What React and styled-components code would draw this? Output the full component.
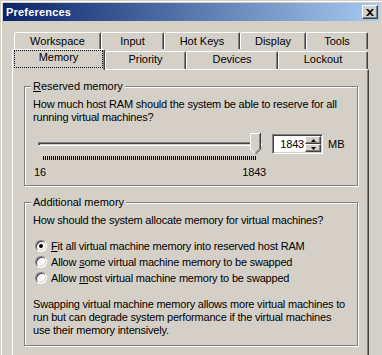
import React from "react";
import styled, { createGlobalStyle } from "styled-components";

const GlobalStyle = createGlobalStyle`
  html, body {
    margin: 0;
    padding: 0;
    overflow: hidden;
    background: #d4d0c8;
  }
  body {
    font-family: "Liberation Sans", Arial, sans-serif;
    font-size: 11px;
    line-height: 13px;
    color: #000;
  }
`;

const Window = styled.div`
  box-sizing: border-box;
  width: 382px;
  height: 355px;
  overflow: hidden;
  padding: 3px 3px 0;
  background: #d4d0c8;
  box-shadow: inset 1px 1px 0 #d4d0c8, inset 2px 2px 0 #fff;
  display: flex;
  flex-direction: column;
`;

const TitleBar = styled.div`
  height: 18px;
  flex: none;
  display: flex;
  align-items: center;
  justify-content: space-between;
  padding: 0 1px 0 3px;
  background: linear-gradient(to right, #0a246a, #a6caf0);
`;

const Title = styled.span`
  color: #fff;
  font-weight: bold;
  letter-spacing: 0.2px;
`;

const CloseButton = styled.div`
  box-sizing: border-box;
  width: 16px;
  height: 14px;
  background: #d4d0c8;
  border: 1px solid;
  border-color: #fff #404040 #404040 #fff;
  box-shadow: inset -1px -1px 0 #808080;
  display: flex;
  align-items: center;
  justify-content: center;
`;

const Body = styled.div`
  flex: none;
  display: flex;
  flex-direction: column;
  padding: 11px 10px 0 9px;
`;

const TabRow = styled.div`
  display: flex;
  align-items: flex-end;
  height: ${(p) => p.$height}px;
  padding-left: ${(p) => p.$indent}px;
`;

const Tab = styled.div`
  box-sizing: border-box;
  flex: none;
  width: ${(p) => p.$width}px;
  height: ${(p) => p.$height}px;
  padding-top: ${(p) => p.$pad}px;
  margin-bottom: ${(p) => (p.$active ? -1 : 0)}px;
  display: flex;
  justify-content: center;
  align-items: flex-start;
  background: #d4d0c8;
  border: 1px solid;
  border-bottom: 0;
  border-color: #fff #404040 transparent #fff;
  border-radius: 2px 2px 0 0;
  box-shadow: inset -1px 0 0 #808080;
  position: relative;
  z-index: ${(p) => (p.$active ? 1 : 0)};
`;

const FocusLabel = styled.span`
  box-sizing: border-box;
  flex: 1;
  height: 18px;
  margin: 0 1px;
  border: 1px dotted #000;
  text-align: center;
`;

const Panel = styled.div`
  display: flex;
  flex-direction: column;
  gap: 10px;
  border: 1px solid;
  border-color: #fff #404040 #404040 #fff;
  box-shadow: inset -1px -1px 0 #808080;
  padding: 10px 10px 30px 11px;
`;

const Group = styled.fieldset`
  margin: 0;
  min-width: 0;
  border: 1px solid #808080;
  box-shadow: inset 1px 1px 0 #fff, 1px 1px 0 #fff;
  padding: 5px 8px ${(p) => p.$bottom}px 8px;
  display: flex;
  flex-direction: column;
`;

const Legend = styled.legend`
  padding: 0 2px;
  margin-left: -2px;
  background: #d4d0c8;
  line-height: 13px;
`;

const Text = styled.p`
  margin: 0;
  letter-spacing: -0.2px;
`;

const SliderRow = styled.div`
  display: flex;
  align-items: flex-start;
  margin-top: 9px;
`;

const Slider = styled.div`
  width: 224px;
  margin-left: 5px;
  display: flex;
  flex-direction: column;
`;

const TrackArea = styled.div`
  position: relative;
  height: 23px;
`;

const Track = styled.div`
  box-sizing: border-box;
  margin-top: 9px;
  height: 4px;
  border: 1px solid;
  border-color: #808080 #fff #fff #808080;
  box-shadow: inset 1px 1px 0 #404040;
`;

const Thumb = styled.svg`
  position: absolute;
  top: 0;
  left: ${(p) => p.$left}px;
`;

const Ticks = styled.div`
  height: 4px;
  margin: 0 6px 0 5px;
  background: repeating-linear-gradient(
    to right,
    #000 0 1px,
    transparent 1px 2px
  );
`;

const Scale = styled.div`
  width: 232px;
  margin: 6px 0 0 1px;
  display: flex;
  justify-content: space-between;
  letter-spacing: -0.2px;
`;

const SpinGroup = styled.div`
  display: flex;
  align-items: center;
  margin: 1px 0 0 10px;
`;

const SpinBox = styled.div`
  box-sizing: border-box;
  width: 51px;
  height: 20px;
  padding: 1px;
  display: flex;
  background: #fff;
  border: 1px solid;
  border-color: #808080 #fff #fff #808080;
  box-shadow: inset 1px 1px 0 #404040, inset -1px -1px 0 #d4d0c8;
`;

const SpinValue = styled.span`
  flex: 1;
  text-align: right;
  padding-right: 1px;
  line-height: 16px;
  letter-spacing: -0.2px;
`;

const SpinButtons = styled.div`
  width: 16px;
  display: flex;
  flex-direction: column;
`;

const SpinButton = styled.div`
  box-sizing: border-box;
  flex: 1;
  display: flex;
  align-items: center;
  justify-content: center;
  background: #d4d0c8;
  border: 1px solid;
  border-color: #fff #404040 #404040 #fff;
  box-shadow: inset -1px -1px 0 #808080;
`;

const Unit = styled.span`
  margin-left: 5px;
`;

const RadioList = styled.div`
  display: flex;
  flex-direction: column;
  margin-top: 11px;
`;

const RadioRow = styled.label`
  height: 16px;
  display: flex;
  align-items: center;
  gap: 4px;
  padding-left: 2px;
  letter-spacing: -0.2px;
`;

const RadioDot = styled.span`
  box-sizing: border-box;
  flex: none;
  width: 12px;
  height: 12px;
  border-radius: 50%;
  border: 1px solid;
  border-color: #808080 #fff #fff #808080;
  box-shadow: inset 1px 1px 0 #404040, inset -1px -1px 0 #d4d0c8;
  background: #fff;
  display: flex;
  align-items: center;
  justify-content: center;

  &::after {
    content: "";
    width: 4px;
    height: 4px;
    border-radius: 50%;
    background: ${(p) => (p.$checked ? "#000" : "transparent")};
  }
`;

const Note = styled(Text)`
  margin-top: 12px;
`;

const rowOneTabs = [
  { label: "Workspace", width: 87 },
  { label: "Input", width: 63 },
  { label: "Hot Keys", width: 76 },
  { label: "Display", width: 66 },
  { label: "Tools", width: 62 },
];

const rowTwoTabs = [
  { label: "Memory", width: 93, active: true },
  { label: "Priority", width: 81 },
  { label: "Devices", width: 92 },
  { label: "Lockout", width: 90 },
];

const radios = [
  { pre: "", key: "F", post: "it all virtual machine memory into reserved host RAM", checked: true },
  { pre: "Allow ", key: "s", post: "ome virtual machine memory to be swapped" },
  { pre: "Allow ", key: "m", post: "ost virtual machine memory to be swapped" },
];

const CloseGlyph = () => (
  <svg width="8" height="7" viewBox="0 0 8 7">
    <path d="M0 0h2l2 2 2-2h2L5 3.5 8 7H6L4 5 2 7H0l3-3.5z" fill="#000" />
  </svg>
);

const ThumbShape = ({ left }) => (
  <Thumb $left={left} width="11" height="22" viewBox="0 0 11 22">
    <path d="M0 0H11V16L5.5 21.5L0 16Z" fill="#d4d0c8" />
    <path d="M0.5 16.5V0.5H10" stroke="#fff" fill="none" />
    <path d="M0.5 16L5 20.5" stroke="#fff" fill="none" />
    <path d="M10.5 0V16.2L5.5 21.2" stroke="#404040" fill="none" />
    <path d="M9.5 1V15.8L5.5 19.8" stroke="#808080" fill="none" />
  </Thumb>
);

const Arrow = ({ up }) => (
  <svg width="5" height="3" viewBox="0 0 5 3">
    <path d={up ? "M2.5 0L5 3H0Z" : "M0 0H5L2.5 3Z"} fill="#000" />
  </svg>
);

export default function App() {
  return (
    <>
      <GlobalStyle />
      <Window>
        <TitleBar>
          <Title>Preferences</Title>
          <CloseButton>
            <CloseGlyph />
          </CloseButton>
        </TitleBar>
        <Body>
          <TabRow $height={17} $indent={2}>
            {rowOneTabs.map((t) => (
              <Tab key={t.label} $width={t.width} $height={17} $pad={2}>
                {t.label}
              </Tab>
            ))}
          </TabRow>
          <TabRow $height={20} $indent={0}>
            {rowTwoTabs.map((t) =>
              t.active ? (
                <Tab key={t.label} $width={t.width} $height={21} $pad={0} $active>
                  <FocusLabel>{t.label}</FocusLabel>
                </Tab>
              ) : (
                <Tab key={t.label} $width={t.width} $height={18} $pad={1}>
                  {t.label}
                </Tab>
              )
            )}
          </TabRow>
          <Panel>
            <Group $bottom={6}>
              <Legend>
                <u>R</u>eserved memory
              </Legend>
              <Text>
                How much host RAM should the system be able to reserve for all
                <br />
                running virtual machines?
              </Text>
              <SliderRow>
                <Slider>
                  <TrackArea>
                    <Track />
                    <ThumbShape left={212} />
                  </TrackArea>
                  <Ticks />
                </Slider>
                <SpinGroup>
                  <SpinBox>
                    <SpinValue>1843</SpinValue>
                    <SpinButtons>
                      <SpinButton>
                        <Arrow up />
                      </SpinButton>
                      <SpinButton>
                        <Arrow />
                      </SpinButton>
                    </SpinButtons>
                  </SpinBox>
                  <Unit>MB</Unit>
                </SpinGroup>
              </SliderRow>
              <Scale>
                <span>16</span>
                <span>1843</span>
              </Scale>
            </Group>
            <Group $bottom={8}>
              <Legend>Additional memory</Legend>
              <Text>How should the system allocate memory for virtual machines?</Text>
              <RadioList>
                {radios.map((r) => (
                  <RadioRow key={r.key}>
                    <RadioDot $checked={r.checked} />
                    <span>
                      {r.pre}
                      <u>{r.key}</u>
                      {r.post}
                    </span>
                  </RadioRow>
                ))}
              </RadioList>
              <Note>
                Swapping virtual machine memory allows more virtual machines to
                <br />
                run but can degrade system performance if the virtual machines
                <br />
                use their memory intensively.
              </Note>
            </Group>
          </Panel>
        </Body>
      </Window>
    </>
  );
}
